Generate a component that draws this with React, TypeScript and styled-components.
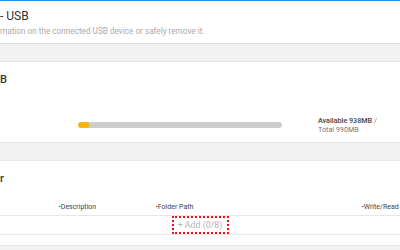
import styled, { createGlobalStyle } from "styled-components";

const GlobalStyle = createGlobalStyle`
  body {
    margin: 0;
    background: #f2f2f2;
    font-family: Roboto, "Liberation Sans", sans-serif;
    overflow: hidden;
  }
`;

const Page = styled.div`
  width: 400px;
  height: 250px;
  display: flex;
  flex-direction: column;
  gap: 17px;
`;

const Header = styled.header`
  height: 44px;
  background: #fff;
  border-top: 1px solid #2196f3;
  border-bottom: 1px solid #dcdcdc;
  padding-top: 8px;
  box-sizing: border-box;
`;

const Title = styled.h1`
  margin: 0;
  font-size: 12px;
  font-weight: 400;
  color: #333;
  line-height: 14px;
`;

const Subtitle = styled.p`
  margin: 3px 0 0;
  font-size: 8.2px;
  color: #aaa;
  line-height: 10px;
`;

const Card = styled.section<{ h: number }>`
  height: ${({ h }) => h}px;
  background: #fff;
  border-top: 1px solid #e6e6e6;
  border-bottom: 1px solid #e6e6e6;
  box-sizing: border-box;
  display: flex;
  flex-direction: column;
`;

const CardTitle = styled.h2`
  margin: 0;
  padding-top: 11px;
  font-size: 11px;
  font-weight: 500;
  color: #333;
  line-height: 13px;
`;

const UsageRow = styled.div`
  display: flex;
  align-items: center;
  padding: 30px 0 0 78px;
`;

const Bar = styled.div`
  width: 204px;
  height: 6px;
  border-radius: 3px;
  background: #cccccc;
  overflow: hidden;
`;

const Fill = styled.div`
  height: 100%;
  background: #f7b500;
  border-radius: 3px;
`;

const Capacity = styled.div`
  margin-left: 36px;
  font-size: 7.2px;
  line-height: 9px;
  color: #777;
`;

const Strong = styled.span`
  color: #444;
  font-weight: 500;
`;

const TableHead = styled.div`
  display: grid;
  grid-template-columns: 97px 206px auto;
  padding: 16px 0 0 59px;
  height: 31px;
  box-sizing: border-box;
  border-bottom: 1px solid #e6e6e6;
  font-size: 7px;
  color: #444;
  line-height: 10px;
  white-space: nowrap;
`;

const Column = styled.span`
  &::before {
    content: "▪";
    font-size: 5px;
    vertical-align: 1px;
  }
`;

const AddRow = styled.div`
  display: flex;
  justify-content: center;
  border-bottom: 1px solid #e6e6e6;
`;

const AddButton = styled.button`
  width: 57px;
  height: 18px;
  border: 2px dotted #e8141b;
  background: #fff;
  font-family: inherit;
  font-size: 8.8px;
  color: #b5b5b5;
  padding: 0;
`;

const used = (990 - 938) / 990;

export default function App() {
  return (
    <>
      <GlobalStyle />
      <Page>
        <Header>
          <Title>- USB</Title>
          <Subtitle>
            mation on the connected USB device or safely remove it.
          </Subtitle>
        </Header>
        <Card h={82}>
          <CardTitle>B</CardTitle>
          <UsageRow>
            <Bar>
              <Fill style={{ width: `${used * 100}%` }} />
            </Bar>
            <Capacity>
              <Strong>Available 938MB</Strong> /
              <br />
              Total 990MB
            </Capacity>
          </UsageRow>
        </Card>
        <Card h={86}>
          <CardTitle>r</CardTitle>
          <TableHead>
            <Column>Description</Column>
            <Column>Folder Path</Column>
            <Column>Write/Read</Column>
          </TableHead>
          <AddRow>
            <AddButton>+ Add (0/8)</AddButton>
          </AddRow>
        </Card>
      </Page>
    </>
  );
}
